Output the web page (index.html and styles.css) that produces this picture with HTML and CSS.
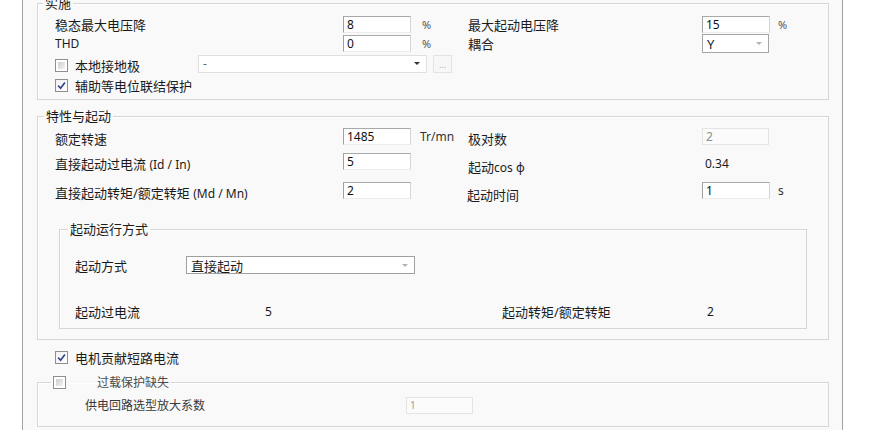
FILE: index.html
```html
<!DOCTYPE html>
<html lang="zh-CN">
<head>
    <meta charset="UTF-8">
    <meta name="viewport" content="width=device-width, initial-scale=1.0">
    <title>电机参数</title>
    <link rel="stylesheet" href="styles.css">
</head>
<body>

<div class="panel">

    <!-- 实施 -->
    <fieldset class="group group-top">
        <legend>实施</legend>
        <div class="grid grid-top">
            <div class="lbl">稳态最大电压降</div>
            <input class="txt" value="8">
            <div class="unit">%</div>
            <div class="lbl">最大起动电压降</div>
            <input class="txt" value="15">
            <div class="unit">%</div>

            <div class="lbl en">THD</div>
            <input class="txt" value="0">
            <div class="unit">%</div>
            <div class="lbl">耦合</div>
            <div class="combo combo-y"><span>Y</span><span class="arrow light"></span></div>
            <div></div>

            <div class="row-wide">
                <label class="check low"><span class="box"></span>本地接地极</label>
                <div class="combo combo-faint"><span>-</span><span class="arrow"></span></div>
                <span class="dots">...</span>
            </div>
            <div class="row-wide">
                <label class="check"><span class="box on"><svg width="9" height="9" viewBox="0 0 9 9"><path d="M1.2 4.6 L3.6 7.2 L7.9 1.4" fill="none" stroke="#2d418f" stroke-width="1.6"/></svg></span>辅助等电位联结保护</label>
            </div>
        </div>
    </fieldset>

    <!-- 特性与起动 -->
    <fieldset class="group group-mid">
        <legend>特性与起动</legend>
        <div class="body-mid">
            <div class="grid grid-mid">
                <div class="lbl">额定转速</div>
                <input class="txt" value="1485">
                <div class="unit en tr">Tr/mn</div>
                <div class="lbl">极对数</div>
                <input class="txt off" value="2">
                <div></div>

                <div class="lbl">直接起动过电流 <span class="en">(Id / In)</span></div>
                <input class="txt" value="5">
                <div></div>
                <div class="lbl dn">起动<span class="en">cos φ</span></div>
                <div class="lbl en val">0.34</div>
                <div></div>

                <div class="lbl">直接起动转矩/额定转矩 <span class="en">(Md / Mn)</span></div>
                <input class="txt" value="2">
                <div></div>
                <div class="lbl dn2">起动时间</div>
                <input class="txt" value="1">
                <div class="unit en">s</div>
            </div>

            <fieldset class="group group-inner">
                <legend>起动运行方式</legend>
                <div class="body-inner">
                    <div class="field-row">
                        <div class="lbl mode">起动方式</div>
                        <div class="combo combo-mode"><span>直接起动</span><span class="arrow light"></span></div>
                    </div>
                    <div class="result-row">
                        <div>起动过电流</div>
                        <div class="en">5</div>
                        <div>起动转矩/额定转矩</div>
                        <div class="en">2</div>
                    </div>
                </div>
            </fieldset>
        </div>
    </fieldset>

    <div class="check-row">
        <label class="check"><span class="box on"><svg width="9" height="9" viewBox="0 0 9 9"><path d="M1.2 4.6 L3.6 7.2 L7.9 1.4" fill="none" stroke="#2d418f" stroke-width="1.6"/></svg></span>电机贡献短路电流</label>
    </div>

    <!-- 过载保护缺失 -->
    <fieldset class="group group-low">
        <legend><span class="box"></span><span class="legend-text">过载保护缺失</span></legend>
        <div class="body-low">
            <div class="lbl small">供电回路选型放大系数</div>
            <input class="txt off tiny" value="1">
        </div>
    </fieldset>

</div>

</body>
</html>
```

FILE: styles.css
```css
* {
    box-sizing: border-box;
}
body {
    margin: 0;
    background: #fff;
    font-family: "Noto Sans", "Noto Sans CJK SC", sans-serif;
    font-size: 13px;
    color: #1b1b1b;
    overflow: hidden;
}
.panel {
    margin-left: 22px;
    width: 821px;
    min-height: 440px;
    padding: 0 13px 0 14px;
    background: #f9f9f9;
    border-left: 1px solid #a3a3a3;
    border-right: 1px solid #a3a3a3;
}
.en {
    font-size: 12px;
}

/* group boxes */
.group {
    margin: 0;
    padding: 0;
    min-width: 0;
    border: 1px solid #d6d6d6;
    box-shadow: inset 1px 1px 0 #fff;
}
.group > legend {
    margin-left: 6px;
    padding: 0 2px;
    font-size: 13px;
    line-height: 16px;
}
.group-top {
    margin-top: -5px;
}
.group-top > legend {
    margin-left: 5px;
}
.group-mid {
    margin-top: 8px;
}
.group-inner {
    width: 748px;
    margin: 17px 0 0 4px;
}
.group-inner > legend {
    margin-left: 8px;
}
.group-low {
    margin-top: 7px;
}
.group-low > legend {
    margin-left: 13px;
    font-size: 12px;
    color: #4a4a4a;
}

/* grids */
.grid {
    display: grid;
    grid-template-columns: 288px 79px 46px 234px 76px 1fr;
}
.grid-top {
    padding: 4px 0 2px 17px;
    grid-template-rows: 19px 19px 21px 23px;
    align-items: center;
}
.body-mid {
    padding: 4px 0 10px 17px;
}
.grid-mid {
    grid-template-rows: 25px 29px 22px;
    align-items: start;
}
.grid-mid .lbl {
    line-height: 22px;
}
.row-wide {
    grid-column: 1 / -1;
    display: flex;
    align-items: center;
}

.lbl {
    white-space: nowrap;
}
.dn {
    padding-top: 3px;
}
.dn2 {
    padding-top: 2px;
    margin-left: -1px;
}
.val {
    padding-left: 3px;
}
.unit {
    font-size: 11px;
    line-height: 17px;
    color: #555;
}
.unit.en {
    font-size: 12px;
    color: #333;
}
.tr {
    margin-left: -2px;
}

/* text boxes */
.txt {
    display: block;
    width: 68px;
    height: 17px;
    margin: 0;
    padding: 0 3px;
    font-family: "Noto Sans", sans-serif;
    font-size: 12px;
    color: #111;
    background: #fff;
    border: 1px solid;
    border-color: #a9a9a9 #d4d4d4 #ececec #a0a0a0;
    outline: none;
}
.txt.off {
    width: 67px;
    color: #8e8e8e;
    background: #fbfbfb;
    border-color: #e4e4e4;
}
.txt.tiny {
    font-size: 10px;
    color: #9a9a9a;
}

/* combos */
.combo {
    display: flex;
    align-items: center;
    justify-content: space-between;
    height: 18px;
    padding: 0 6px 0 4px;
    background: #fff;
    border: 1px solid #acacac;
    font-size: 12px;
}
.combo-y {
    width: 67px;
    height: 19px;
    font-size: 13px;
    border-color: #a5a5a5;
}
.combo-faint {
    width: 229px;
    border-color: #e0e0e0;
    color: #666;
}
.combo-mode {
    width: 229px;
    font-size: 13px;
    border-color: #a0a0a0;
}
.arrow {
    width: 0;
    height: 0;
    border-left: 3px solid transparent;
    border-right: 3px solid transparent;
    border-top: 3px solid #333;
}
.arrow.light {
    border-top-color: #b3b3b3;
}
.dots {
    display: flex;
    align-items: flex-end;
    justify-content: center;
    width: 19px;
    height: 18px;
    margin-left: 6px;
    padding-bottom: 3px;
    font-size: 9px;
    line-height: 9px;
    color: #aaa;
    background: #f7f7f7;
    border: 1px solid #e3e3e3;
}

/* check boxes */
.check {
    display: flex;
    align-items: center;
    white-space: nowrap;
}
.check.low {
    width: 143px;
    padding-top: 3px;
}
.box {
    display: inline-flex;
    align-items: center;
    justify-content: center;
    flex: none;
    width: 13px;
    height: 13px;
    margin-right: 7px;
    padding: 2px;
    border: 1px solid #8e8f8f;
    background: linear-gradient(135deg, #cdcdcd, #f3f3f3) content-box, #fff;
    vertical-align: middle;
}
.box.on {
    padding: 0;
    background: linear-gradient(135deg, #f0f0f0, #fff);
}
.check-row {
    height: 20px;
    margin-top: 7px;
    padding-left: 18px;
    display: flex;
    align-items: center;
}

/* inner start group */
.body-inner {
    padding: 19px 0 6px 15px;
}
.field-row {
    display: flex;
    align-items: center;
    height: 18px;
}
.mode {
    width: 111px;
}
.result-row {
    display: grid;
    grid-template-columns: 190px 237px 205px auto;
    margin-top: 28px;
    line-height: 20px;
}

/* overload group */
.legend-text {
    margin-left: 24px;
    vertical-align: middle;
}
.body-low {
    display: grid;
    grid-template-columns: 321px 67px;
    align-items: center;
    padding: 6px 0 12px 47px;
}
.small {
    font-size: 12px;
    color: #3a3a3a;
    line-height: 17px;
}
```
